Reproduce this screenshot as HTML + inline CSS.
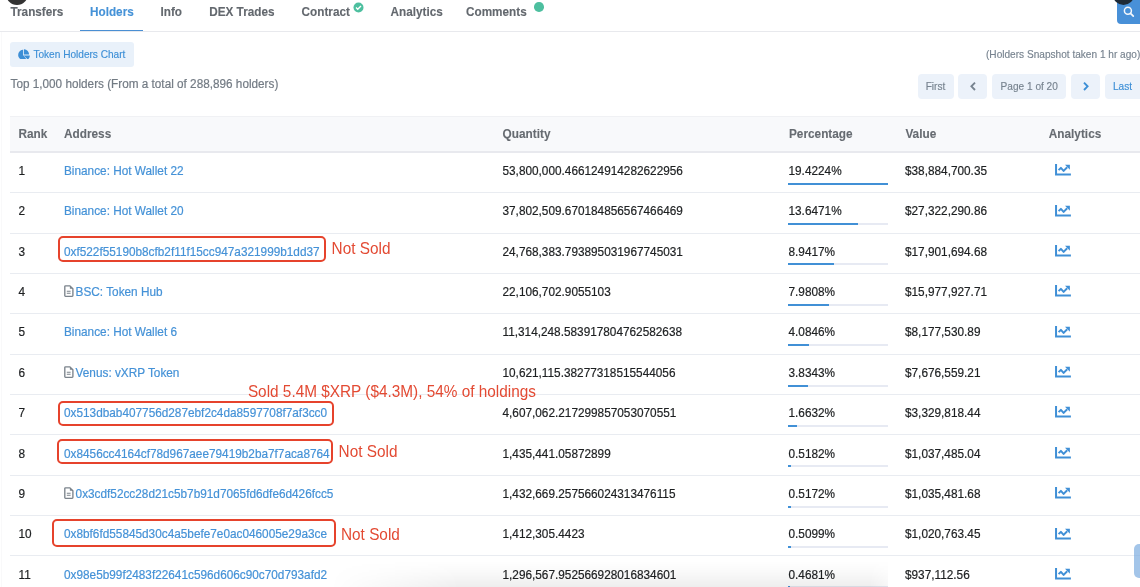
<!DOCTYPE html>
<html><head><meta charset="utf-8">
<style>
html,body{margin:0;padding:0;background:#fff;}
body{width:1140px;height:587px;overflow:hidden;position:relative;font-family:"Liberation Sans",sans-serif;}
.t,.tab,.ann,.hd,.sm{position:absolute;white-space:nowrap;line-height:1;transform:scaleY(1.1);}
.t,.hd{transform-origin:0 9.99px;}
.tab{transform-origin:0 9.95px;}
.sm{transform-origin:0 8.55px;}
.ann{transform-origin:0 12.99px;}
.t{font-size:11.8px;color:#1e2022;-webkit-text-stroke:0.2px currentColor;}
.lk{color:#4592d7;}
.tab{font-size:11.75px;font-weight:700;color:#63686e;-webkit-text-stroke:0.12px currentColor;}
.tab.act{color:#4592d7;}
.hd{font-size:11.8px;font-weight:700;color:#666b71;-webkit-text-stroke:0.1px currentColor;}
.sm{font-size:10.1px;color:#77838f;-webkit-text-stroke:0.15px currentColor;}
.ann{font-size:15.35px;color:#e34a33;}
.sep{position:absolute;left:10px;right:0;height:1px;background:#e9ecf1;}
.bar{position:absolute;left:788px;width:100px;height:2px;background:#e7eaf3;}
.bar i{display:block;height:2px;background:#4190d6;}
.ic{position:absolute;line-height:0;}
.rbox{position:absolute;box-sizing:border-box;border:2.8px solid #e6432c;border-radius:5px;}
.pbtn{position:absolute;top:74px;height:25px;background:#ecf2fa;border-radius:4px;}
</style></head><body>
<div style="position:absolute;left:6px;top:-17px;width:22px;height:22px;border-radius:50%;background:#333;"></div>
<div style="position:absolute;left:1117px;top:-4px;width:30px;height:27.5px;border-radius:4px;background:#4890d8;"></div>
<div style="position:absolute;left:1113px;top:-15px;width:21px;height:20px;border-radius:50%;background:#1e2a36;"></div>
<svg style="position:absolute;left:1122px;top:5px" width="14" height="14" viewBox="0 0 14 14"><circle cx="5.9" cy="5.7" r="3.5" fill="none" stroke="#f4f7fb" stroke-width="1.5"/><path d="M8.5 8.3l2.8 2.9" stroke="#f4f7fb" stroke-width="1.7" stroke-linecap="round"/></svg>
<div class="tab" style="left:10.5px;top:5.95px">Transfers</div>
<div class="tab act" style="left:90px;top:5.95px">Holders</div>
<div class="tab" style="left:160.5px;top:5.95px">Info</div>
<div class="tab" style="left:209.2px;top:5.95px">DEX Trades</div>
<div class="tab" style="left:301.6px;top:5.95px">Contract</div>
<div class="tab" style="left:390.6px;top:5.95px">Analytics</div>
<div class="tab" style="left:466px;top:5.95px">Comments</div>
<div style="position:absolute;left:79.5px;top:30.2px;width:63.5px;height:2px;background:#4a8fd3;"></div>
<svg style="position:absolute;left:352.6px;top:1.6px" width="11" height="11" viewBox="0 0 11 11"><circle cx="5.5" cy="5.5" r="5" fill="#4dbf9f"/><path d="M3 5.6l1.7 1.6 3.3-3.3" fill="none" stroke="#fff" stroke-width="1.4"/></svg>
<div style="position:absolute;left:534px;top:2.3px;width:9.6px;height:9.6px;border-radius:50%;background:#4dbf9f;"></div>
<div style="position:absolute;left:0;right:0;top:31px;height:1px;background:#e8e9ed;"></div>
<div style="position:absolute;left:1px;top:32px;bottom:0;width:1px;background:#f9f9fa;"></div>

<div style="position:absolute;left:10px;top:42px;width:124px;height:24.5px;border-radius:3px;background:#e9f1fa;"></div>
<svg style="position:absolute;left:18.3px;top:48.9px" width="11.8" height="10.5" viewBox="0 0 576 512"><path fill="#3d8fd6" d="M558.3 320H280.7l184.9 184.9c7.1 7.1 18.7 7.6 26 .7 45.3-42.7 76.4-100.2 85.5-164.8 1.6-11-7.6-20.8-18.8-20.8zm-18.5-75.9C531.1 117.8 430.2 16.9 303.9 8.2 294.1 7.5 288 15.8 288 24.4V264h239.6c8.7 0 16.9-6.1 16.2-15.9zM248 296V56.3c0-8.9-8.2-16.8-18-15.9C104.5 53.5 8 160.9 8 288c0 134.9 110.4 244.8 245.5 240 48.6-1.7 93.2-17.6 130.6-44.1 7.5-5.3 8-16.6 1.5-23.1L248 296z"/></svg>
<div class="sm" style="left:33.4px;top:50.05px;color:#3d8fd6;">Token Holders Chart</div>
<div class="sm" style="left:986px;top:50.45px;">(Holders Snapshot taken 1 hr ago)</div>
<div class="t" style="left:10.5px;top:78.41px;color:#737b84;font-size:11.75px;">Top 1,000 holders (From a total of 288,896 holders)</div>

<div class="pbtn" style="left:918px;width:36px;"></div>
<div class="pbtn" style="left:958px;width:29px;"></div>
<div class="pbtn" style="left:992px;width:74px;"></div>
<div class="pbtn" style="left:1071px;width:29px;"></div>
<div class="pbtn" style="left:1105px;width:40px;"></div>
<div class="sm" style="left:925.7px;top:81.75px;">First</div>
<div class="sm" style="left:1000.6px;top:81.75px;">Page 1 of 20</div>
<div class="sm" style="left:1113px;top:81.75px;color:#3d8fd6;">Last</div>
<svg style="position:absolute;left:969px;top:81px" width="8" height="11" viewBox="0 0 8 11"><path d="M6 1.6L2.4 5.3 6 9" fill="none" stroke="#77838f" stroke-width="1.9"/></svg>
<svg style="position:absolute;left:1081.5px;top:81px" width="8" height="11" viewBox="0 0 8 11"><path d="M2 1.6l3.6 3.7L2 9" fill="none" stroke="#3d8fd6" stroke-width="1.9"/></svg>

<div style="position:absolute;left:10px;right:0;top:116px;height:36px;background:#f8f9fb;border-top:1px solid #f0f1f4;box-sizing:border-box;"></div>
<div style="position:absolute;left:10px;right:0;top:151px;height:2px;background:#e8e9ee;"></div>
<div class="hd" style="left:18.4px;top:129.31px;">Rank</div>
<div class="hd" style="left:64px;top:129.31px;">Address</div>
<div class="hd" style="left:502.6px;top:129.31px;">Quantity</div>
<div class="hd" style="left:789px;top:129.31px;">Percentage</div>
<div class="hd" style="left:905.4px;top:129.31px;">Value</div>
<div class="hd" style="left:1048.8px;top:129.31px;">Analytics</div>
<div class="sep" style="top:192.00px"></div>
<div class="t" style="left:18.5px;top:166.01px">1</div>
<div class="t lk" style="left:64px;top:166.01px">Binance: Hot Wallet 22</div>
<div class="t" style="left:502.5px;top:166.01px">53,800,000.466124914282622956</div>
<div class="t" style="left:788.5px;top:166.01px">19.4224%</div>
<div class="bar" style="top:182.70px"><i style="width:100.00px"></i></div>
<div class="t" style="left:905px;top:166.01px">$38,884,700.35</div>
<div class="ic" style="left:1055px;top:164.30px"><svg class="chart" width="17" height="12" viewBox="0 0 17 12"><path d="M1.05 0V10.45H15.9" fill="none" stroke="#3f8fd6" stroke-width="2"/><path d="M3.6 6.1L5.9 3.9 8.6 6.9 12.2 3.3" fill="none" stroke="#3f8fd6" stroke-width="2" stroke-linejoin="round"/><path d="M10 0.8H14.9V5.7Z" fill="#3f8fd6"/></svg></div>
<div class="sep" style="top:233.00px"></div>
<div class="t" style="left:18.5px;top:206.37px">2</div>
<div class="t lk" style="left:64px;top:206.37px">Binance: Hot Wallet 20</div>
<div class="t" style="left:502.5px;top:206.37px">37,802,509.670184856567466469</div>
<div class="t" style="left:788.5px;top:206.37px">13.6471%</div>
<div class="bar" style="top:223.06px"><i style="width:70.26px"></i></div>
<div class="t" style="left:905px;top:206.37px">$27,322,290.86</div>
<div class="ic" style="left:1055px;top:204.66px"><svg class="chart" width="17" height="12" viewBox="0 0 17 12"><path d="M1.05 0V10.45H15.9" fill="none" stroke="#3f8fd6" stroke-width="2"/><path d="M3.6 6.1L5.9 3.9 8.6 6.9 12.2 3.3" fill="none" stroke="#3f8fd6" stroke-width="2" stroke-linejoin="round"/><path d="M10 0.8H14.9V5.7Z" fill="#3f8fd6"/></svg></div>
<div class="sep" style="top:273.00px"></div>
<div class="t" style="left:18.5px;top:246.73px">3</div>
<div class="t lk" style="left:64px;top:246.73px">0xf522f55190b8cfb2f11f15cc947a321999b1dd37</div>
<div class="t" style="left:502.5px;top:246.73px">24,768,383.793895031967745031</div>
<div class="t" style="left:788.5px;top:246.73px">8.9417%</div>
<div class="bar" style="top:263.42px"><i style="width:46.04px"></i></div>
<div class="t" style="left:905px;top:246.73px">$17,901,694.68</div>
<div class="ic" style="left:1055px;top:245.02px"><svg class="chart" width="17" height="12" viewBox="0 0 17 12"><path d="M1.05 0V10.45H15.9" fill="none" stroke="#3f8fd6" stroke-width="2"/><path d="M3.6 6.1L5.9 3.9 8.6 6.9 12.2 3.3" fill="none" stroke="#3f8fd6" stroke-width="2" stroke-linejoin="round"/><path d="M10 0.8H14.9V5.7Z" fill="#3f8fd6"/></svg></div>
<div class="sep" style="top:313.00px"></div>
<div class="t" style="left:18.5px;top:287.09px">4</div>
<div class="ic" style="left:63.8px;top:285.18px"><svg class="doc" width="10" height="12" viewBox="0 0 10 12"><path d="M1.5 0.85H5.9L8.9 3.85V10.6A0.7 0.7 0 0 1 8.2 11.3H1.5A0.7 0.7 0 0 1 0.8 10.6V1.55A0.7 0.7 0 0 1 1.5 0.85Z" fill="none" stroke="#7b838b" stroke-width="1.35"/><path d="M5.9 1.2V3.85H8.6Z" fill="#7b838b"/><path d="M2.8 6.3H6.6M2.8 8.3H6.6" stroke="#7b838b" stroke-width="1.1"/></svg></div>
<div class="t lk" style="left:75.6px;top:287.09px">BSC: Token Hub</div>
<div class="t" style="left:502.5px;top:287.09px">22,106,702.9055103</div>
<div class="t" style="left:788.5px;top:287.09px">7.9808%</div>
<div class="bar" style="top:303.78px"><i style="width:41.09px"></i></div>
<div class="t" style="left:905px;top:287.09px">$15,977,927.71</div>
<div class="ic" style="left:1055px;top:285.38px"><svg class="chart" width="17" height="12" viewBox="0 0 17 12"><path d="M1.05 0V10.45H15.9" fill="none" stroke="#3f8fd6" stroke-width="2"/><path d="M3.6 6.1L5.9 3.9 8.6 6.9 12.2 3.3" fill="none" stroke="#3f8fd6" stroke-width="2" stroke-linejoin="round"/><path d="M10 0.8H14.9V5.7Z" fill="#3f8fd6"/></svg></div>
<div class="sep" style="top:354.00px"></div>
<div class="t" style="left:18.5px;top:327.45px">5</div>
<div class="t lk" style="left:64px;top:327.45px">Binance: Hot Wallet 6</div>
<div class="t" style="left:502.5px;top:327.45px">11,314,248.583917804762582638</div>
<div class="t" style="left:788.5px;top:327.45px">4.0846%</div>
<div class="bar" style="top:344.14px"><i style="width:21.03px"></i></div>
<div class="t" style="left:905px;top:327.45px">$8,177,530.89</div>
<div class="ic" style="left:1055px;top:325.74px"><svg class="chart" width="17" height="12" viewBox="0 0 17 12"><path d="M1.05 0V10.45H15.9" fill="none" stroke="#3f8fd6" stroke-width="2"/><path d="M3.6 6.1L5.9 3.9 8.6 6.9 12.2 3.3" fill="none" stroke="#3f8fd6" stroke-width="2" stroke-linejoin="round"/><path d="M10 0.8H14.9V5.7Z" fill="#3f8fd6"/></svg></div>
<div class="sep" style="top:394.00px"></div>
<div class="t" style="left:18.5px;top:367.81px">6</div>
<div class="ic" style="left:63.8px;top:365.90px"><svg class="doc" width="10" height="12" viewBox="0 0 10 12"><path d="M1.5 0.85H5.9L8.9 3.85V10.6A0.7 0.7 0 0 1 8.2 11.3H1.5A0.7 0.7 0 0 1 0.8 10.6V1.55A0.7 0.7 0 0 1 1.5 0.85Z" fill="none" stroke="#7b838b" stroke-width="1.35"/><path d="M5.9 1.2V3.85H8.6Z" fill="#7b838b"/><path d="M2.8 6.3H6.6M2.8 8.3H6.6" stroke="#7b838b" stroke-width="1.1"/></svg></div>
<div class="t lk" style="left:75.6px;top:367.81px">Venus: vXRP Token</div>
<div class="t" style="left:502.5px;top:367.81px">10,621,115.38277318515544056</div>
<div class="t" style="left:788.5px;top:367.81px">3.8343%</div>
<div class="bar" style="top:384.50px"><i style="width:19.74px"></i></div>
<div class="t" style="left:905px;top:367.81px">$7,676,559.21</div>
<div class="ic" style="left:1055px;top:366.10px"><svg class="chart" width="17" height="12" viewBox="0 0 17 12"><path d="M1.05 0V10.45H15.9" fill="none" stroke="#3f8fd6" stroke-width="2"/><path d="M3.6 6.1L5.9 3.9 8.6 6.9 12.2 3.3" fill="none" stroke="#3f8fd6" stroke-width="2" stroke-linejoin="round"/><path d="M10 0.8H14.9V5.7Z" fill="#3f8fd6"/></svg></div>
<div class="sep" style="top:434.00px"></div>
<div class="t" style="left:18.5px;top:408.17px">7</div>
<div class="t lk" style="left:64px;top:408.17px">0x513dbab407756d287ebf2c4da8597708f7af3cc0</div>
<div class="t" style="left:502.5px;top:408.17px">4,607,062.217299857053070551</div>
<div class="t" style="left:788.5px;top:408.17px">1.6632%</div>
<div class="bar" style="top:424.86px"><i style="width:8.56px"></i></div>
<div class="t" style="left:905px;top:408.17px">$3,329,818.44</div>
<div class="ic" style="left:1055px;top:406.46px"><svg class="chart" width="17" height="12" viewBox="0 0 17 12"><path d="M1.05 0V10.45H15.9" fill="none" stroke="#3f8fd6" stroke-width="2"/><path d="M3.6 6.1L5.9 3.9 8.6 6.9 12.2 3.3" fill="none" stroke="#3f8fd6" stroke-width="2" stroke-linejoin="round"/><path d="M10 0.8H14.9V5.7Z" fill="#3f8fd6"/></svg></div>
<div class="sep" style="top:475.00px"></div>
<div class="t" style="left:18.5px;top:448.53px">8</div>
<div class="t lk" style="left:64px;top:448.53px">0x8456cc4164cf78d967aee79419b2ba7f7aca8764</div>
<div class="t" style="left:502.5px;top:448.53px">1,435,441.05872899</div>
<div class="t" style="left:788.5px;top:448.53px">0.5182%</div>
<div class="bar" style="top:465.22px"><i style="width:2.67px"></i></div>
<div class="t" style="left:905px;top:448.53px">$1,037,485.04</div>
<div class="ic" style="left:1055px;top:446.82px"><svg class="chart" width="17" height="12" viewBox="0 0 17 12"><path d="M1.05 0V10.45H15.9" fill="none" stroke="#3f8fd6" stroke-width="2"/><path d="M3.6 6.1L5.9 3.9 8.6 6.9 12.2 3.3" fill="none" stroke="#3f8fd6" stroke-width="2" stroke-linejoin="round"/><path d="M10 0.8H14.9V5.7Z" fill="#3f8fd6"/></svg></div>
<div class="sep" style="top:515.00px"></div>
<div class="t" style="left:18.5px;top:488.89px">9</div>
<div class="ic" style="left:63.8px;top:486.98px"><svg class="doc" width="10" height="12" viewBox="0 0 10 12"><path d="M1.5 0.85H5.9L8.9 3.85V10.6A0.7 0.7 0 0 1 8.2 11.3H1.5A0.7 0.7 0 0 1 0.8 10.6V1.55A0.7 0.7 0 0 1 1.5 0.85Z" fill="none" stroke="#7b838b" stroke-width="1.35"/><path d="M5.9 1.2V3.85H8.6Z" fill="#7b838b"/><path d="M2.8 6.3H6.6M2.8 8.3H6.6" stroke="#7b838b" stroke-width="1.1"/></svg></div>
<div class="t lk" style="left:75.6px;top:488.89px">0x3cdf52cc28d21c5b7b91d7065fd6dfe6d426fcc5</div>
<div class="t" style="left:502.5px;top:488.89px">1,432,669.257566024313476115</div>
<div class="t" style="left:788.5px;top:488.89px">0.5172%</div>
<div class="bar" style="top:505.58px"><i style="width:2.66px"></i></div>
<div class="t" style="left:905px;top:488.89px">$1,035,481.68</div>
<div class="ic" style="left:1055px;top:487.18px"><svg class="chart" width="17" height="12" viewBox="0 0 17 12"><path d="M1.05 0V10.45H15.9" fill="none" stroke="#3f8fd6" stroke-width="2"/><path d="M3.6 6.1L5.9 3.9 8.6 6.9 12.2 3.3" fill="none" stroke="#3f8fd6" stroke-width="2" stroke-linejoin="round"/><path d="M10 0.8H14.9V5.7Z" fill="#3f8fd6"/></svg></div>
<div class="sep" style="top:555.00px"></div>
<div class="t" style="left:18.5px;top:529.25px">10</div>
<div class="t lk" style="left:64px;top:529.25px">0x8bf6fd55845d30c4a5befe7e0ac046005e29a3ce</div>
<div class="t" style="left:502.5px;top:529.25px">1,412,305.4423</div>
<div class="t" style="left:788.5px;top:529.25px">0.5099%</div>
<div class="bar" style="top:545.94px"><i style="width:2.63px"></i></div>
<div class="t" style="left:905px;top:529.25px">$1,020,763.45</div>
<div class="ic" style="left:1055px;top:527.54px"><svg class="chart" width="17" height="12" viewBox="0 0 17 12"><path d="M1.05 0V10.45H15.9" fill="none" stroke="#3f8fd6" stroke-width="2"/><path d="M3.6 6.1L5.9 3.9 8.6 6.9 12.2 3.3" fill="none" stroke="#3f8fd6" stroke-width="2" stroke-linejoin="round"/><path d="M10 0.8H14.9V5.7Z" fill="#3f8fd6"/></svg></div>
<div class="sep" style="top:596.00px"></div>
<div class="t" style="left:18.5px;top:569.61px">11</div>
<div class="t lk" style="left:64px;top:569.61px">0x98e5b99f2483f22641c596d606c90c70d793afd2</div>
<div class="t" style="left:502.5px;top:569.61px">1,296,567.952566928016834601</div>
<div class="t" style="left:788.5px;top:569.61px">0.4681%</div>
<div class="bar" style="top:586.30px"><i style="width:2.41px"></i></div>
<div class="t" style="left:905px;top:569.61px">$937,112.56</div>
<div class="ic" style="left:1055px;top:567.90px"><svg class="chart" width="17" height="12" viewBox="0 0 17 12"><path d="M1.05 0V10.45H15.9" fill="none" stroke="#3f8fd6" stroke-width="2"/><path d="M3.6 6.1L5.9 3.9 8.6 6.9 12.2 3.3" fill="none" stroke="#3f8fd6" stroke-width="2" stroke-linejoin="round"/><path d="M10 0.8H14.9V5.7Z" fill="#3f8fd6"/></svg></div>
<div class="rbox" style="left:58.1px;top:236.3px;width:267.5px;height:26.1px"></div>
<div class="rbox" style="left:57.8px;top:400.7px;width:276.1px;height:25.6px"></div>
<div class="rbox" style="left:57.1px;top:439.1px;width:275.8px;height:25.2px"></div>
<div class="rbox" style="left:51.5px;top:518.8px;width:284.6px;height:27.9px"></div>
<div class="ann" style="left:331.6px;top:241.11px">Not Sold</div>
<div class="ann" style="left:338.6px;top:443.61px">Not Sold</div>
<div class="ann" style="left:341px;top:527.21px">Not Sold</div>
<div class="ann" style="left:247.9px;top:384.01px">Sold 5.4M $XRP ($4.3M), 54% of holdings</div>
<div style="position:absolute;left:330px;width:558px;top:561px;height:26px;background:linear-gradient(to bottom,rgba(0,0,0,0),rgba(0,0,0,0.02) 40%,rgba(0,0,0,0.065));-webkit-mask-image:linear-gradient(to right,transparent,#000 130px,#000 540px,rgba(0,0,0,0.5));"></div>
<div style="position:absolute;left:1134.3px;top:543.6px;width:12px;height:34px;border-radius:5px;background:rgba(120,170,222,0.68);"></div>
</body></html>
